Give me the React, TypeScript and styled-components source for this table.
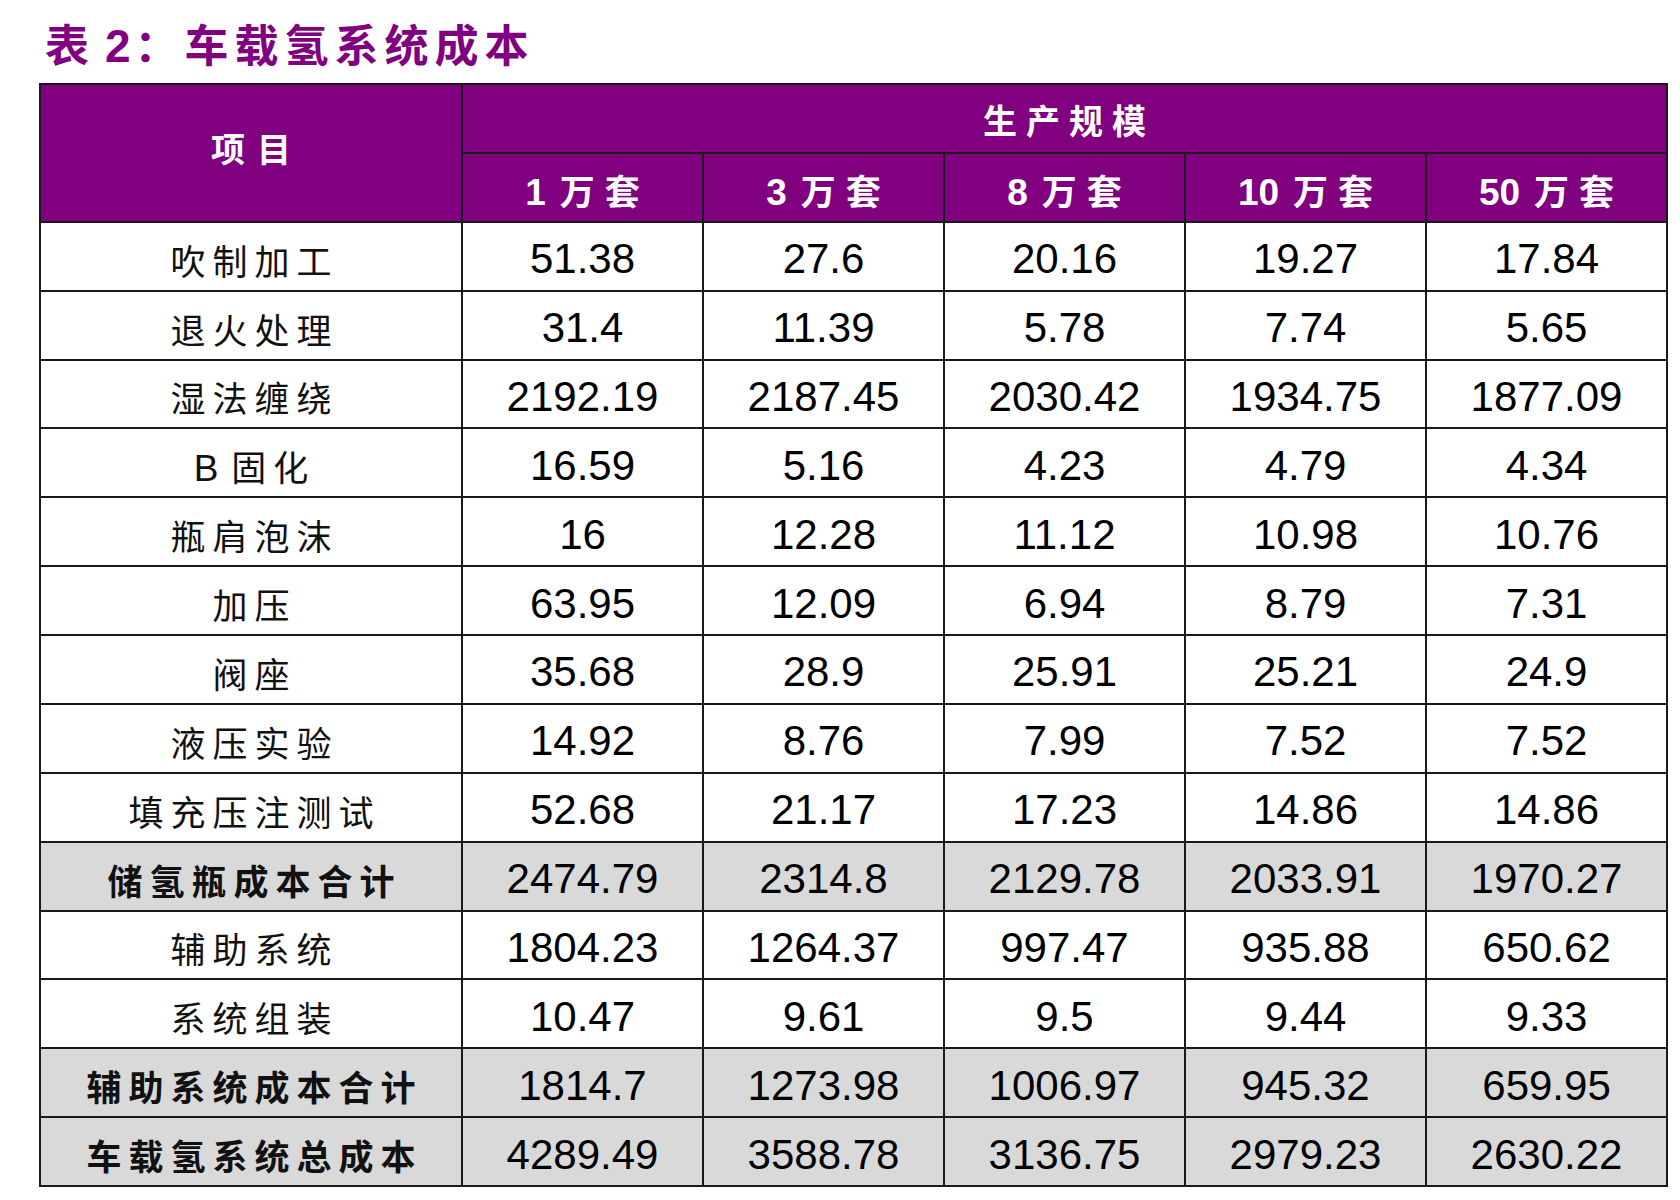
import { FunctionComponent } from "react";
import styled, { createGlobalStyle } from "styled-components";

const GlobalStyle = createGlobalStyle`
  html, body {
    margin: 0;
    padding: 0;
    background: #ffffff;
  }
  body {
    font-family: "Liberation Sans", "Noto Sans CJK SC", sans-serif;
  }
`;

const Page = styled.div`
  padding: 17px 0 0 39px;
  width: 1680px;
  box-sizing: border-box;
`;

const Caption = styled.h1`
  margin: 0 0 13px 6px;
  height: 53px;
  line-height: 53px;
  font-family: "Noto Sans CJK SC", sans-serif;
  font-size: 44px;
  font-weight: 700;
  color: #800080;
  letter-spacing: 6px;
  white-space: nowrap;
`;

const Num = styled.span`
  font-family: "Liberation Sans", Arial, sans-serif;
  font-size: 46px;
  font-weight: 700;
  letter-spacing: 0;
  margin: 0 4px 0 10px;
`;

const Table = styled.table`
  table-layout: fixed;
  width: 1629px;
  border-collapse: separate;
  border-spacing: 0;
  border-top: 2px solid #1a1a1a;
  border-left: 2px solid #1a1a1a;
`;

const Row = styled.tr<{ $total?: boolean }>`
  height: 68.875px;
  background: ${(p) => (p.$total ? "#d9d9d9" : "#ffffff")};
`;

const HeadCell = styled.th`
  background: #800080;
  color: #ffffff;
  border-right: 2px solid #1a1a1a;
  border-bottom: 2px solid #1a1a1a;
  font-family: "Noto Sans CJK SC", sans-serif;
  font-size: 34px;
  font-weight: 700;
  letter-spacing: 9px;
  text-align: center;
  vertical-align: middle;
  padding: 2px 0 0 9px;
  box-sizing: border-box;
`;

const ItemHead = styled(HeadCell)`
  letter-spacing: 12px;
  padding-left: 12px;
  padding-bottom: 12px;
`;

const ScaleHead = styled(HeadCell)`
  font-size: 35px;
  letter-spacing: 10px;
  padding-left: 10px;
  padding-top: 4px;
`;

const ScaleNum = styled.span`
  font-family: "Liberation Sans", Arial, sans-serif;
  font-size: 37px;
  letter-spacing: 0;
  margin-right: 14px;
`;

const LabelCell = styled.td<{ $total?: boolean }>`
  border-right: 2px solid #1a1a1a;
  border-bottom: 2px solid #1a1a1a;
  font-family: "Noto Sans CJK SC", sans-serif;
  font-size: 35px;
  font-weight: ${(p) => (p.$total ? 700 : 400)};
  letter-spacing: 7px;
  padding: 6px 0 0 7px;
  color: #111111;
  text-align: center;
  vertical-align: middle;
  white-space: nowrap;
  box-sizing: border-box;
`;

const Latin = styled.span`
  font-family: "Liberation Sans", Arial, sans-serif;
  font-size: 37px;
  margin-right: 6px;
`;

const ValueCell = styled.td`
  border-right: 2px solid #1a1a1a;
  border-bottom: 2px solid #1a1a1a;
  font-family: "Liberation Sans", Arial, sans-serif;
  font-size: 42px;
  color: #000000;
  text-align: center;
  vertical-align: middle;
  padding: 6px 0 0;
  box-sizing: border-box;
`;

type Item = {
  label: string;
  latin?: string;
  values: string[];
  total?: boolean;
};

const scales = ["1", "3", "8", "10", "50"];

const items: Item[] = [
  { label: "吹制加工", values: ["51.38", "27.6", "20.16", "19.27", "17.84"] },
  { label: "退火处理", values: ["31.4", "11.39", "5.78", "7.74", "5.65"] },
  { label: "湿法缠绕", values: ["2192.19", "2187.45", "2030.42", "1934.75", "1877.09"] },
  { label: "固化", latin: "B", values: ["16.59", "5.16", "4.23", "4.79", "4.34"] },
  { label: "瓶肩泡沫", values: ["16", "12.28", "11.12", "10.98", "10.76"] },
  { label: "加压", values: ["63.95", "12.09", "6.94", "8.79", "7.31"] },
  { label: "阀座", values: ["35.68", "28.9", "25.91", "25.21", "24.9"] },
  { label: "液压实验", values: ["14.92", "8.76", "7.99", "7.52", "7.52"] },
  { label: "填充压注测试", values: ["52.68", "21.17", "17.23", "14.86", "14.86"] },
  { label: "储氢瓶成本合计", values: ["2474.79", "2314.8", "2129.78", "2033.91", "1970.27"], total: true },
  { label: "辅助系统", values: ["1804.23", "1264.37", "997.47", "935.88", "650.62"] },
  { label: "系统组装", values: ["10.47", "9.61", "9.5", "9.44", "9.33"] },
  { label: "辅助系统成本合计", values: ["1814.7", "1273.98", "1006.97", "945.32", "659.95"], total: true },
  { label: "车载氢系统总成本", values: ["4289.49", "3588.78", "3136.75", "2979.23", "2630.22"], total: true },
];

const App: FunctionComponent = () => (
  <Page>
    <GlobalStyle />
    <Caption>
      表<Num>2</Num>：车载氢系统成本
    </Caption>
    <Table>
      <colgroup>
        <col style={{ width: 422 }} />
        {scales.map((s) => (
          <col key={s} style={{ width: 241 }} />
        ))}
      </colgroup>
      <thead>
        <Row>
          <ItemHead rowSpan={2}>项目</ItemHead>
          <HeadCell colSpan={5}>生产规模</HeadCell>
        </Row>
        <Row>
          {scales.map((s) => (
            <ScaleHead key={s}>
              <ScaleNum>{s}</ScaleNum>万套
            </ScaleHead>
          ))}
        </Row>
      </thead>
      <tbody>
        {items.map((item) => (
          <Row key={item.label} $total={item.total}>
            <LabelCell $total={item.total}>
              {item.latin && <Latin>{item.latin}</Latin>}
              {item.label}
            </LabelCell>
            {item.values.map((v, i) => (
              <ValueCell key={i}>{v}</ValueCell>
            ))}
          </Row>
        ))}
      </tbody>
    </Table>
  </Page>
);

export default App;
